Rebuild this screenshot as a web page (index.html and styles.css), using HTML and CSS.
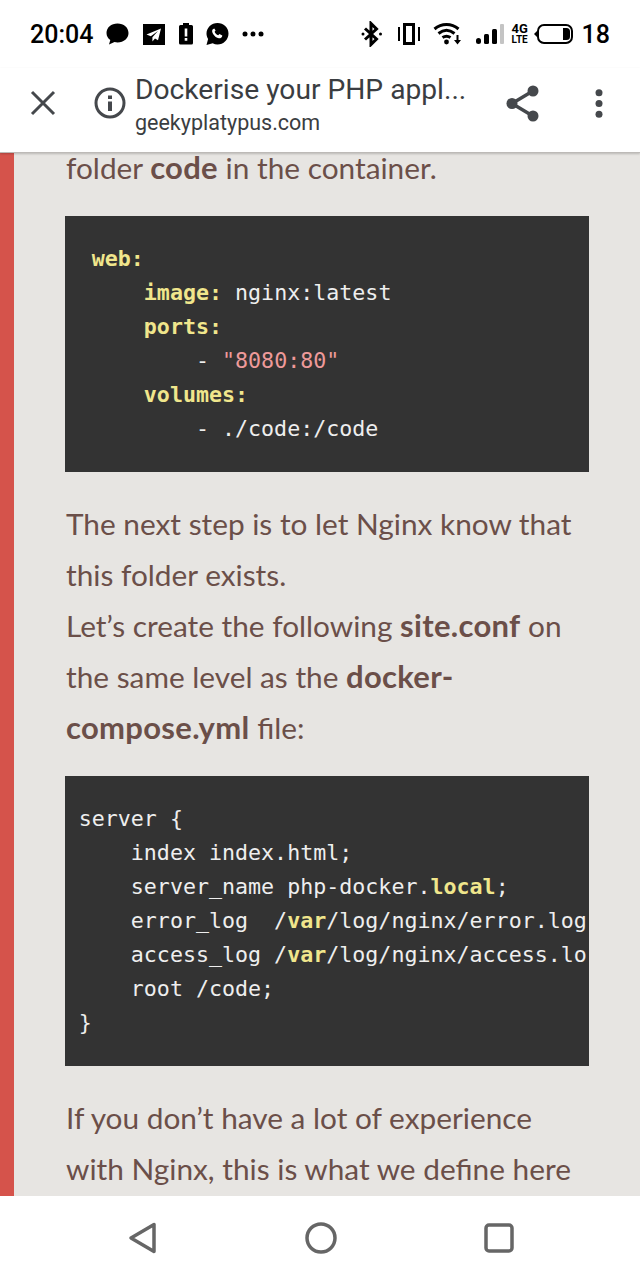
FILE: index.html
```html
<!DOCTYPE html>
<html lang="en">
<head>
<meta charset="utf-8">
<title>Dockerise your PHP application</title>
<link rel="stylesheet" href="styles.css">
</head>
<body>
<div class="screen">
  <header class="status">
    <div class="status-left">
      <span class="clock">20:04</span>
      <svg class="msg" width="23" height="24" viewBox="1 0 22 24"><path d="M12 1.500C5.600 1.500 1 5.600 1 11c0 3 1.500 5.400 3.800 7L3.500 22.500 9 20c1 .2 2 .4 3 .4 6.400 0 11-4 11-9.400S18.400 1.500 12 1.500z" fill="#000"/></svg>
      <svg class="tg" width="22" height="21" viewBox="1 1.500 22 21"><path d="M1 1.500h22v21H1z" fill="#000"/><path d="M19 6 4.500 12l4.300 1.700L16 8.500l-5.600 6.300v4.200l2.600-3 3 1.700z" fill="#fff"/></svg>
      <svg class="alert" width="14" height="22" viewBox="1 1 14 22"><path d="M5 1h6v2h2.500A1.500 1.500 0 0 1 15 4.500V21a1.500 1.500 0 0 1-1.500 1.500h-11A1.500 1.500 0 0 1 1 21V4.500A1.500 1.500 0 0 1 2.500 3H5z" fill="#000"/><path d="M6.700 6.500h2.600v8H6.700zM6.700 16h2.600v2.800H6.700z" fill="#fff"/></svg>
      <svg class="wa" width="24" height="24" viewBox="0 0 24 24"><path d="M12.500 1C6.500 1 1.500 5.700 1.500 11.500c0 2 .6 3.800 1.600 5.400L1.500 23l6.200-1.700c1.500.8 3.100 1.200 4.800 1.200 6 0 11-4.900 11-11S18.500 1 12.500 1z" fill="#000"/><path d="M9.300 6.500 7.800 7.300c-1 1-.9 2.700.3 4.700 1.400 2.300 3.600 4 5.700 4.300 1.500.2 2.800-.4 3.300-1.700l.2-1.200-2.800-1.500-1.300 1.400c-1.600-.6-2.900-1.900-3.600-3.500l1-1.200z" fill="#fff"/></svg>
      <svg class="dots" width="22" height="6" viewBox="0 0 22 6"><circle cx="3" cy="3" r="2.500"/><circle cx="11" cy="3" r="2.500"/><circle cx="19" cy="3" r="2.500"/></svg>
    </div>
    <div class="status-right">
      <svg class="bt" width="22" height="26" viewBox="0 0 22 26"><path d="M4 7.500 15.500 18 10 23.500V2.500L15.500 8 4 18.500" fill="none" stroke="#000" stroke-width="3"/><circle cx="2" cy="13" r="1.500"/><circle cx="19.500" cy="13" r="1.500"/></svg>
      <svg class="vib" width="22" height="24" viewBox="0 0 22 24"><path d="M5 1h12v22H5zM8 4v16h6V4z" fill="#000" fill-rule="evenodd"/><path d="M0 5h2v14H0zM20 5h2v14h-2z" fill="#000"/></svg>
      <svg class="wifi" width="28" height="24" viewBox="0 0 28 24"><path d="M1.500 7c7-6 17-6 24 0M5.500 11.500c5-4 11-4 16 0M9.500 15.500c3-2 5-2 8 0" fill="none" stroke="#000" stroke-width="3"/><circle cx="13.500" cy="20" r="2.400"/><path d="M23.500 13h2v5H28L24.500 22.500 21 18h2.500z"/></svg>
      <svg class="signal" width="28" height="20" viewBox="0 0 28 20"><rect x="0" y="14" width="5" height="6" rx="2.500"/><rect x="8" y="10" width="5" height="10" rx="1.500"/><rect x="16" y="5" width="5" height="15" rx="1.500"/><rect x="24" y="0" width="4" height="20" rx="1" fill="#c4c4c4"/></svg>
      <div class="net"><span>4G</span><span class="lte">LTE</span></div>
      <svg class="batt" width="40" height="20" viewBox="0 0 40 20"><path d="M0 10l3-3v6z"/><rect x="4" y="1" width="34" height="18" rx="6" fill="none" stroke="#000" stroke-width="2"/><path d="M29 4h3.500A3.500 3.500 0 0 1 36 7.500v5a3.500 3.500 0 0 1-3.500 3.500H29z"/></svg>
      <span class="level">18</span>
    </div>
  </header>

  <nav class="toolbar">
    <svg class="close" width="26" height="26" viewBox="0 0 26 26"><path d="M2 2l22 22M24 2 2 24" stroke="#45484c" stroke-width="3" fill="none"/></svg>
    <svg class="info" width="32" height="32" viewBox="0 0 32 32"><circle cx="16" cy="16" r="14" fill="none" stroke="#45484c" stroke-width="3"/><path d="M14 14.500h4V24h-4zM14 8.500h4v3.500h-4z" fill="#45484c"/></svg>
    <div class="page-title">
      <div class="title">Dockerise your PHP appl...</div>
      <div class="url">geekyplatypus.com</div>
    </div>
    <svg class="share" width="33" height="37" viewBox="0 0 33 37"><path d="M26 6.500 6 18.500l20 12" fill="none" stroke="#45484c" stroke-width="3.500"/><circle cx="27" cy="6" r="5.500" fill="#45484c"/><circle cx="6" cy="18.500" r="5.500" fill="#45484c"/><circle cx="27" cy="31" r="5.500" fill="#45484c"/></svg>
    <svg class="more" width="8" height="29" viewBox="0 0 8 29"><circle cx="4" cy="3.800" r="3.500" fill="#45484c"/><circle cx="4" cy="14.500" r="3.500" fill="#45484c"/><circle cx="4" cy="25.200" r="3.500" fill="#45484c"/></svg>
  </nav>

  <main class="page">
    <article class="article">
      <p>folder <b>code</b> in the container.</p>
      <pre class="code"> <b>web:</b>
     <b>image:</b> nginx:latest
     <b>ports:</b>
         - <span class="str">"8080:80"</span>
     <b>volumes:</b>
         - ./code:/code</pre>
      <p>The next step is to let Nginx know that this folder exists.<br>Let’s create the following <b>site.conf</b> on the same level as the <b>docker-compose.yml</b> file:</p>
      <pre class="code">server {
    index index.html;
    server_name php-docker.<b>local</b>;
    error_log  /<b>var</b>/log/nginx/error.log;
    access_log /<b>var</b>/log/nginx/access.log;
    root /code;
}</pre>
      <p>If you don’t have a lot of experience with Nginx, this is what we define here</p>
    </article>
  </main>

  <footer class="nav">
    <svg width="30" height="32" viewBox="0 0 30 32"><path d="M26 2.500v27L3 16z" fill="none" stroke="#666" stroke-width="3.500" stroke-linejoin="round"/></svg>
    <svg width="32" height="32" viewBox="0 0 32 32"><circle cx="16" cy="16" r="14" fill="none" stroke="#666" stroke-width="3.500"/></svg>
    <svg width="30" height="30" viewBox="0 0 30 30"><rect x="2" y="2" width="26" height="26" rx="3" fill="none" stroke="#666" stroke-width="3.500"/></svg>
  </footer>
</div>
</body>
</html>
```

FILE: styles.css
```css
* { box-sizing: border-box; }
html, body { margin: 0; padding: 0; }
body { font-family: Roboto, "Liberation Sans", sans-serif; background: #fff; }

.screen { width: 640px; height: 1280px; display: flex; flex-direction: column; overflow: hidden; }

.status { height: 68px; flex: none; display: flex; justify-content: space-between; align-items: center; padding: 0 30px; background: #fff; color: #000; }
.status-left, .status-right { display: flex; align-items: center; }
.clock, .level { font-size: 25px; font-weight: 500; line-height: 1; }
.msg { margin-left: 13px; }
.tg { margin-left: 14px; }
.alert { margin-left: 14px; }
.wa { margin-left: 12px; }
.dots { margin-left: 13px; }
.vib { margin-left: 15px; }
.wifi { margin-left: 13px; }
.signal { margin-left: 15px; }
.net { margin-left: 8px; width: 16px; display: flex; flex-direction: column; font: 700 13px/12px "Liberation Sans Narrow", Roboto, sans-serif; text-align: center; }
.net .lte { font-size: 10px; line-height: 10px; }
.batt { margin-left: 6px; }
.level { margin-left: 8px; }

.toolbar { height: 85px; flex: none; display: flex; align-items: center; background: #fff; position: relative; z-index: 2; border-bottom: 1px solid #bdbab7; box-shadow: 0 1px 2px rgba(0,0,0,.2); padding: 0 0 14px 30px; }
.info { margin-left: 38px; }
.page-title { margin: 4px 0 0 9px; width: 371px; color: #3a3d41; }
.title { font-size: 28.2px; line-height: 36px; white-space: nowrap; }
.url { font-size: 21.5px; line-height: 30px; }
.more { margin-left: 56px; }

.page { flex: 1; min-height: 0; overflow: hidden; background: #e7e5e2; border-left: 14px solid #d5534b; padding: 0 51px; }
.article { margin-top: -11px; font-family: Lato, "Open Sans", sans-serif; font-size: 29.8px; line-height: 51px; color: #6b4f49; }
.article p { margin: 0 0 23px; padding-left: 1px; }
.article p b { font-weight: 700; font-size: 31px; line-height: 1; letter-spacing: .3px; }
.code { margin: 0 0 26px; padding: 26px 0 26px 13.7px; background: #333; color: #eee; overflow: hidden; font: 400 21.65px/34px "DejaVu Sans Mono", monospace; border-right: 3px solid #333; }
.code b { color: #f0e68c; font-weight: 700; }
.code .str { color: #ee9a9a; }

.nav { height: 84px; flex: none; display: flex; align-items: center; background: #fff; gap: 147px; padding-left: 128px; }
```
